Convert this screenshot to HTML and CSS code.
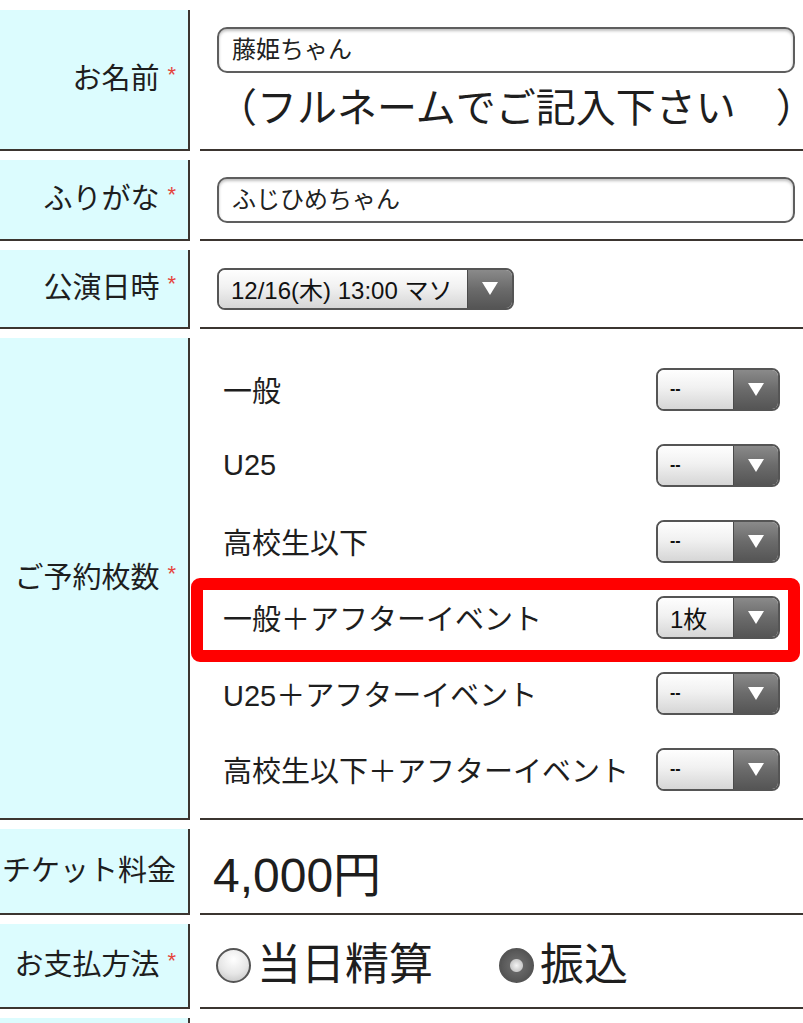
FILE: index.html
```html
<!DOCTYPE html>
<html lang="ja">
<head>
    <meta charset="UTF-8">
    <meta name="viewport" content="width=device-width, initial-scale=1.0">
    <title>ご予約フォーム</title>
    <link rel="stylesheet" href="styles.css">
</head>
<body>
    <div class="form">
        <div class="row row-name">
            <div class="label">お名前<span class="req">*</span></div>
            <div class="value value-top">
                <div class="input">藤姫ちゃん</div>
                <p class="note">（フルネームでご記入下さい<span class="note-end">）</span></p>
            </div>
        </div>

        <div class="row row-kana">
            <div class="label">ふりがな<span class="req">*</span></div>
            <div class="value">
                <div class="input">ふじひめちゃん</div>
            </div>
        </div>

        <div class="row row-date">
            <div class="label">公演日時<span class="req">*</span></div>
            <div class="value">
                <div class="select select-wide">
                    <span class="select-val">12/16(木) 13:00 マソ</span>
                    <span class="select-arrow"><svg width="16" height="13" viewBox="0 0 16 13"><path d="M0 0H16L8 13Z" fill="#fff"/></svg></span>
                </div>
            </div>
        </div>

        <div class="row row-tickets">
            <div class="label">ご予約枚数<span class="req">*</span></div>
            <div class="value value-list">
                <div class="ticket">
                    <span>一般</span>
                    <div class="select"><span class="select-val dash">--</span><span class="select-arrow"><svg width="16" height="13" viewBox="0 0 16 13"><path d="M0 0H16L8 13Z" fill="#fff"/></svg></span></div>
                </div>
                <div class="ticket">
                    <span>U25</span>
                    <div class="select"><span class="select-val dash">--</span><span class="select-arrow"><svg width="16" height="13" viewBox="0 0 16 13"><path d="M0 0H16L8 13Z" fill="#fff"/></svg></span></div>
                </div>
                <div class="ticket">
                    <span>高校生以下</span>
                    <div class="select"><span class="select-val dash">--</span><span class="select-arrow"><svg width="16" height="13" viewBox="0 0 16 13"><path d="M0 0H16L8 13Z" fill="#fff"/></svg></span></div>
                </div>
                <div class="ticket">
                    <span>一般＋アフターイベント</span>
                    <div class="select"><span class="select-val">1枚</span><span class="select-arrow"><svg width="16" height="13" viewBox="0 0 16 13"><path d="M0 0H16L8 13Z" fill="#fff"/></svg></span></div>
                </div>
                <div class="ticket">
                    <span>U25＋アフターイベント</span>
                    <div class="select"><span class="select-val dash">--</span><span class="select-arrow"><svg width="16" height="13" viewBox="0 0 16 13"><path d="M0 0H16L8 13Z" fill="#fff"/></svg></span></div>
                </div>
                <div class="ticket">
                    <span>高校生以下＋アフターイベント</span>
                    <div class="select"><span class="select-val dash">--</span><span class="select-arrow"><svg width="16" height="13" viewBox="0 0 16 13"><path d="M0 0H16L8 13Z" fill="#fff"/></svg></span></div>
                </div>
            </div>
        </div>

        <div class="row row-price">
            <div class="label">チケット料金</div>
            <div class="value">
                <span class="price">4,000円</span>
            </div>
        </div>

        <div class="row row-pay">
            <div class="label">お支払方法<span class="req">*</span></div>
            <div class="value">
                <div class="radio-group">
                    <span class="radio"></span>
                    <span class="radio-text">当日精算</span>
                    <span class="radio checked"></span>
                    <span class="radio-text">振込</span>
                </div>
            </div>
        </div>

        <div class="row row-more">
            <div class="label"></div>
            <div class="value"></div>
        </div>

        <!-- highlight box drawn over the ticket row -->
        <div class="highlight"></div>
    </div>
</body>
</html>
```

FILE: styles.css
```css
* {
    margin: 0;
    padding: 0;
    box-sizing: border-box;
}

body {
    font-family: "Liberation Sans", "Noto Sans CJK JP", sans-serif;
    color: #1e1e1e;
    background: #fff;
    padding-top: 10px;
    overflow: hidden;
}

.form {
    position: relative;
    width: 830px;
    display: flex;
    flex-direction: column;
    gap: 9px;
}

.row {
    display: grid;
    grid-template-columns: 190px 1fr;
    column-gap: 10px;
}

.row-name { height: 141px; }
.row-kana { height: 81px; }
.row-date { height: 79px; }
.row-tickets { height: 482px; }
.row-price { height: 86px; }
.row-pay { height: 85px; }
.row-more { height: 40px; }

.label {
    background: #dcfcfe;
    border-right: 2px solid #3b3530;
    border-bottom: 2px solid #3b3530;
    display: flex;
    align-items: center;
    justify-content: flex-end;
    padding-right: 12px;
    font-size: 29px;
    line-height: 1.2;
    white-space: nowrap;
}

.req {
    color: #e5443c;
    font-size: 22px;
    margin-left: 8px;
    position: relative;
    top: -4px;
}

.value {
    border-bottom: 2px solid #3b3530;
    display: flex;
    align-items: center;
    padding-left: 17px;
}

.value-top {
    flex-direction: column;
    align-items: flex-start;
    padding-top: 17px;
}

/* text box */
.input {
    width: 578px;
    height: 46px;
    border: 2px solid #5e5e5e;
    border-radius: 10px;
    box-shadow: inset 0 2px 3px rgba(0, 0, 0, 0.25);
    background: #fff;
    font-size: 24px;
    line-height: 42px;
    padding-left: 13px;
    color: #222;
}

.note {
    font-size: 40px;
    line-height: 50px;
    margin-top: 10px;
    white-space: nowrap;
}

.note-end {
    margin-left: 40px;
    letter-spacing: -20px;
}

/* select look */
.select {
    display: flex;
    width: 124px;
    height: 43px;
    border: 2px solid #555;
    border-radius: 8px;
    overflow: hidden;
}

.select-wide {
    width: 297px;
    height: 42px;
}

.select-val {
    flex: 1;
    display: flex;
    align-items: center;
    padding-left: 12px;
    background: linear-gradient(#fefefe, #f1f1f1 45%, #d6d6d6);
    font-size: 24px;
    color: #111;
    white-space: nowrap;
}

.select-val.dash {
    font-size: 16px;
    font-weight: bold;
}

.select-arrow {
    width: 45px;
    display: flex;
    align-items: center;
    justify-content: center;
    background: linear-gradient(#8a8a8a, #6b6b6b 50%, #555);
    border-left: 1px solid #4a4a4a;
}

/* ticket list */
.value-list {
    flex-direction: column;
    align-items: stretch;
    padding: 13px 0 0 23px;
}

.ticket {
    width: 557px;
    height: 76px;
    display: flex;
    align-items: center;
    justify-content: space-between;
    font-size: 29px;
}

.price {
    font-size: 48px;
    margin-left: -4px;
}

/* radios */
.radio-group {
    display: flex;
    align-items: center;
}

.radio {
    width: 35px;
    height: 35px;
    border-radius: 50%;
    border: 2px solid #555;
    background: radial-gradient(circle at 50% 30%, #fff, #e6e6e6 55%, #bdbdbd);
    margin-left: -1px;
}

.radio.checked {
    margin-left: 66px;
    background: radial-gradient(circle, #f4f4f4 0, #c9c9c9 6px, #666 7px, #4a4a4a 100%);
}

.radio-text {
    font-size: 44px;
    line-height: 1.2;
    margin-left: 6px;
}

.highlight {
    position: absolute;
    left: 191px;
    top: 568px;
    width: 609px;
    height: 84px;
    border: 12px solid #ff0000;
    border-radius: 9px;
}
```
